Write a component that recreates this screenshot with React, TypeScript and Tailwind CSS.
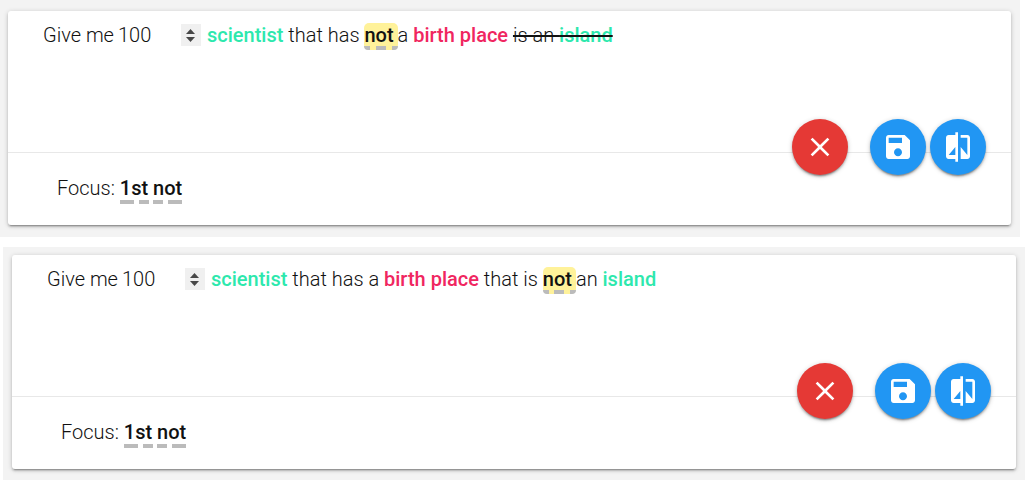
import { useState, type ReactNode } from "react";

function Stepper({ onStep }: { onStep: (delta: number) => void }) {
  return (
    <span className="flex h-[22px] w-5 shrink-0 flex-col bg-[#f0f0f0]">
      <button
        type="button"
        aria-label="Increase"
        onClick={() => onStep(1)}
        className="flex h-[11px] items-end justify-center pb-px"
      >
        <svg width="9" height="5" viewBox="0 0 9 5" fill="#484848" aria-hidden="true">
          <path d="M4.5 0 9 5H0z" />
        </svg>
      </button>
      <button
        type="button"
        aria-label="Decrease"
        onClick={() => onStep(-1)}
        className="flex h-[11px] items-start justify-center pt-0.5"
      >
        <svg width="9" height="5" viewBox="0 0 9 5" fill="#484848" aria-hidden="true">
          <path d="M4.5 5 0 0h9z" />
        </svg>
      </button>
    </span>
  );
}

function AmountField({ id }: { id: string }) {
  const [amount, setAmount] = useState(100);
  return (
    <span className="mr-1.5 flex items-center">
      <label htmlFor={id} className="mr-1">
        Give me
      </label>
      <input
        id={id}
        type="number"
        value={amount}
        onChange={(e) => setAmount(Number(e.target.value))}
        className="w-[63px] bg-transparent p-0 font-light outline-none [appearance:textfield] [&::-webkit-inner-spin-button]:appearance-none"
      />
      <Stepper onStep={(delta) => setAmount((n) => n + delta)} />
    </span>
  );
}

function Concept({ children }: { children: ReactNode }) {
  return <b className="font-medium text-[#2de8ad]">{children}</b>;
}

function Relation({ children }: { children: ReactNode }) {
  return <b className="font-medium text-[#f02660]">{children}</b>;
}

function FocusedWord({ children }: { children: ReactNode }) {
  return (
    <b className="relative inline-block rounded-[5px] bg-[#fff29a] pr-1 pb-[3px] font-medium leading-6">
      {children}
      <span className="absolute inset-x-0 bottom-0 flex h-1 justify-between overflow-hidden rounded-b-[4px]">
        <i className="w-1.5 bg-[#bbb]" />
        <i className="w-2.5 bg-[#bbb]" />
        <i className="w-1.5 bg-[#bbb]" />
      </span>
    </b>
  );
}

function RoundButton({ label, color, path }: { label: string; color: string; path: string }) {
  return (
    <button
      type="button"
      aria-label={label}
      className={`flex size-14 items-center justify-center rounded-full text-white shadow-[0_2px_2px_0_rgba(0,0,0,0.2),0_3px_1px_-2px_rgba(0,0,0,0.2),0_1px_5px_0_rgba(0,0,0,0.2)] ${color}`}
    >
      <svg width="32" height="32" viewBox="0 0 24 24" fill="currentColor" aria-hidden="true">
        <path d={path} />
      </svg>
    </button>
  );
}

const CLOSE =
  "M19 6.41 17.59 5 12 10.59 6.41 5 5 6.41 10.59 12 5 17.59 6.41 19 12 13.41 17.59 19 19 17.59 13.41 12z";
const SAVE =
  "M17 3H5c-1.11 0-2 .9-2 2v14c0 1.1.89 2 2 2h14c1.1 0 2-.9 2-2V7l-4-4zm-5 16c-1.66 0-3-1.34-3-3s1.34-3 3-3 3 1.34 3 3-1.34 3-3 3zm3-10H5V5h10v4z";
const COMPARE =
  "M10 3H5c-1.1 0-2 .9-2 2v14c0 1.1.9 2 2 2h5v2h2V1h-2v2zm0 15H5l5-6v6zm9-15h-5v2h5v13l-5-6v9h5c1.1 0 2-.9 2-2V5c0-1.1-.9-2-2-2z";

function QueryCard({ id, children }: { id: string; children: ReactNode }) {
  return (
    <article className="rounded-[3px] bg-white shadow-[0_2px_2px_0_rgba(0,0,0,0.16),0_3px_1px_-2px_rgba(0,0,0,0.2),0_1px_5px_0_rgba(0,0,0,0.2)]">
      <div className="relative min-h-[142px] border-b border-[#e8e8e8] px-[35px] pt-2.5">
        <div className="flex items-start leading-7">
          <AmountField id={id} />
          <p>{children}</p>
        </div>
        <div className="absolute right-[25px] -bottom-[23px] flex gap-1">
          <span className="mr-[18px]">
            <RoundButton label="Discard" color="bg-[#e53935]" path={CLOSE} />
          </span>
          <RoundButton label="Save" color="bg-[#2196f3]" path={SAVE} />
          <RoundButton label="Compare" color="bg-[#2196f3]" path={COMPARE} />
        </div>
      </div>
      <p className="px-[49px] pt-[21px] pb-[23px] leading-7">
        Focus:{" "}
        <b className="relative inline-block font-medium">
          1st not
          <span className="absolute inset-x-0 -bottom-0.5 flex h-1 justify-between">
            <i className="w-3.5 bg-[#bbb]" />
            <i className="w-2.5 bg-[#bbb]" />
            <i className="w-2.5 bg-[#bbb]" />
            <i className="w-3.5 bg-[#bbb]" />
          </span>
        </b>
      </p>
    </article>
  );
}

export default function App() {
  return (
    <main className="flex flex-col gap-2.5 bg-white font-['Roboto',sans-serif] text-[20px] font-light text-[#111]">
      <section className="mr-[5px] bg-[#f3f3f3] pt-[11px] pr-[9px] pb-3 pl-2">
        <QueryCard id="amount-first">
          <Concept>scientist</Concept> that has <FocusedWord>not</FocusedWord>a{" "}
          <Relation>birth place</Relation>{" "}
          <s>
            is an <Concept>island</Concept>
          </s>
        </QueryCard>
      </section>
      <section className="ml-[3px] bg-[#f3f3f3] pt-2 pr-[9px] pb-[11px] pl-[9px]">
        <QueryCard id="amount-second">
          <Concept>scientist</Concept> that has a <Relation>birth place</Relation> that is{" "}
          <FocusedWord>not</FocusedWord>an <Concept>island</Concept>
        </QueryCard>
      </section>
    </main>
  );
}
